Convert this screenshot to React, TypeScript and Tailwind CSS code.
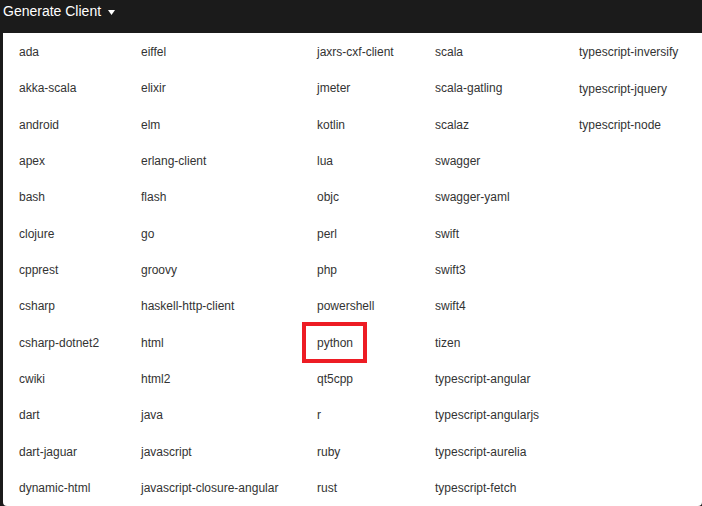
import React from "react";

const columns: string[][] = [
  [
    "ada",
    "akka-scala",
    "android",
    "apex",
    "bash",
    "clojure",
    "cpprest",
    "csharp",
    "csharp-dotnet2",
    "cwiki",
    "dart",
    "dart-jaguar",
    "dynamic-html",
  ],
  [
    "eiffel",
    "elixir",
    "elm",
    "erlang-client",
    "flash",
    "go",
    "groovy",
    "haskell-http-client",
    "html",
    "html2",
    "java",
    "javascript",
    "javascript-closure-angular",
  ],
  [
    "jaxrs-cxf-client",
    "jmeter",
    "kotlin",
    "lua",
    "objc",
    "perl",
    "php",
    "powershell",
    "python",
    "qt5cpp",
    "r",
    "ruby",
    "rust",
  ],
  [
    "scala",
    "scala-gatling",
    "scalaz",
    "swagger",
    "swagger-yaml",
    "swift",
    "swift3",
    "swift4",
    "tizen",
    "typescript-angular",
    "typescript-angularjs",
    "typescript-aurelia",
    "typescript-fetch",
  ],
  ["typescript-inversify", "typescript-jquery", "typescript-node"],
];

const widths = ["w-[122px]", "w-[176px]", "w-[118px]", "w-[144px]", "flex-1"];

function ClientItem({ name }: { name: string }) {
  const highlighted = name === "python";
  return (
    <div className="relative flex h-[36.4px] items-center whitespace-nowrap">
      <span>{name}</span>
      {highlighted && (
        <span className="pointer-events-none absolute left-[-15px] top-[-3px] h-[41px] w-[65px] border-4 border-[#ed1c24]" />
      )}
    </div>
  );
}

export default function App() {
  return (
    <div
      className="h-[506px] w-[702px] overflow-hidden bg-[#1b1b1b]"
      style={{ fontFamily: '"Liberation Sans", Arial, sans-serif' }}
    >
      <div className="flex h-[33px] items-start pl-[3px] pt-[3px] text-[14px] leading-[16px] text-white">
        <span>Generate Client</span>
        <svg className="ml-[7px] mt-[7px]" width="7" height="5" viewBox="0 0 7 5">
          <path d="M0 0 H7 L3.5 5 Z" fill="#ffffff" />
        </svg>
      </div>
      <div className="ml-[3px] flex h-[473px] rounded-b-[4px] bg-white pl-[16px] pt-[1px] text-[12px] leading-[14px] text-[#333333]">
        {columns.map((col, i) => (
          <div key={i} className={`flex flex-col ${widths[i]}`}>
            {col.map((name) => (
              <ClientItem key={name} name={name} />
            ))}
          </div>
        ))}
      </div>
    </div>
  );
}
